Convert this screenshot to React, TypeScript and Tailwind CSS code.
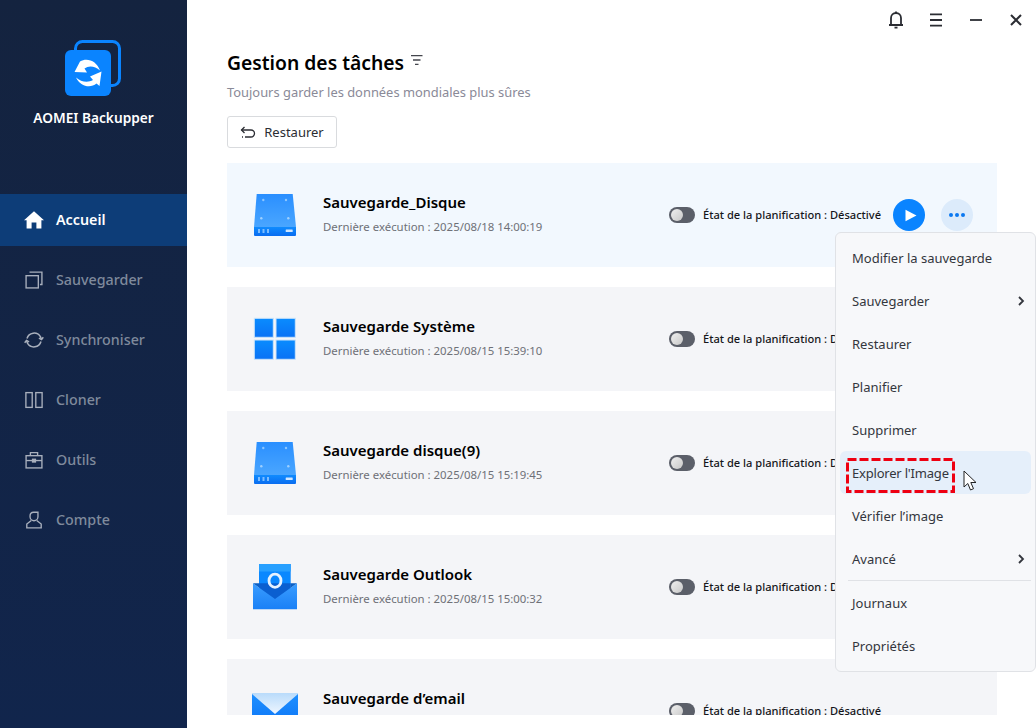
import React from "react";

const FONT = { fontFamily: '"Noto Sans", "Open Sans", sans-serif' };

function Home() {
  return (
    <svg width="20" height="20" viewBox="0 0 20 20" fill="#fff">
      <path d="M10 1.2 L20 10.2 L17.4 10.2 L17.4 18.6 L12.4 18.6 L12.4 12.6 L7.6 12.6 L7.6 18.6 L2.6 18.6 L2.6 10.2 L0 10.2 Z" />
    </svg>
  );
}
const stroke = { fill: "none", stroke: "#a9b0bd", strokeWidth: 1.5 };
function BackupIco() {
  return (
    <svg width="18" height="18" viewBox="0 0 20 20" {...stroke}>
      <rect x="1.2" y="5.2" width="13.6" height="13.6" />
      <path d="M5 1.2 H18.8 V15 H16.6" />
    </svg>
  );
}
function SyncIco() {
  return (
    <svg width="20" height="20" viewBox="0 0 20 20" {...stroke}>
      <path d="M3 8.5 A7.4 7.4 0 0 1 16.4 6.6 L17.5 9.2" />
      <path d="M17 11.5 A7.4 7.4 0 0 1 3.6 13.4 L2.5 10.8" />
      <path d="M19.3 7.2 L17.5 9.6 L14.9 8.2" />
      <path d="M0.7 12.8 L2.5 10.4 L5.1 11.8" />
    </svg>
  );
}
function CloneIco() {
  return (
    <svg width="18" height="18" viewBox="0 0 20 20" {...stroke}>
      <rect x="1" y="1.8" width="7" height="16.4" />
      <rect x="12" y="1.8" width="7" height="16.4" />
    </svg>
  );
}
function ToolsIco() {
  return (
    <svg width="18" height="18" viewBox="0 0 20 20" {...stroke}>
      <rect x="1.2" y="5.2" width="17.6" height="13.6" />
      <path d="M1.2 10.6 H18.8" />
      <path d="M6 5 V1.8 H14 V5" />
      <rect x="8.4" y="9.2" width="3.2" height="3" fill="#a9b0bd" />
    </svg>
  );
}
function UserIco() {
  return (
    <svg width="18" height="18" viewBox="0 0 20 20" {...stroke}>
      <path d="M14.4 1.4 H9.6 A4.2 4.2 0 0 0 5.6 5.6 V6.4 A4.4 4.4 0 0 0 14.4 6.4 Z" />
      <path d="M7 10.6 L2 14.5 V18.8 H18 V14.5 L13 10.6" />
    </svg>
  );
}

function Logo() {
  return (
    <svg width="58" height="58" viewBox="0 0 58 58">
      <rect x="11.5" y="2.5" width="44" height="44" rx="7" fill="none" stroke="#0a84ff" strokeWidth="3" />
      <rect x="1" y="11" width="46" height="46" rx="6" fill="#0a84ff" />
      <path d="M16 22.5 L10.5 33 L23 33.5 L20.5 29.5 C25 26 31 27 36 31.5 C33 22 23 18 16 22.5 Z" fill="#fff" />
      <path d="M37.5 32.5 L26 37.5 L29 41 C24 44 17 43 12 38.5 C16 47 26 50 32.5 44.5 L35.5 47 Z" fill="#fff" />
    </svg>
  );
}

function DiskIcon() {
  return (
    <svg width="44" height="44" viewBox="0 0 44 44">
      <defs>
        <linearGradient id="dg" x1="0" y1="0" x2="0" y2="1">
          <stop offset="0" stopColor="#2a8fff" />
          <stop offset="1" stopColor="#4aa6ff" />
        </linearGradient>
        <linearGradient id="dh" x1="0" y1="0" x2="0" y2="1">
          <stop offset="0" stopColor="#0f8cff" />
          <stop offset="1" stopColor="#0a6cf0" />
        </linearGradient>
      </defs>
      <path d="M3.7 1 H39.7 L43 34 H1 Z" fill="url(#dg)" />
      <path d="M1 34 H43 V42 A1 1 0 0 1 42 43 H2 A1 1 0 0 1 1 42 Z" fill="url(#dh)" />
      <circle cx="10.3" cy="7" r="1.2" fill="#8cc6ff" />
      <circle cx="33" cy="7" r="1.2" fill="#8cc6ff" />
      <circle cx="8.3" cy="25.3" r="1.2" fill="#9fd0ff" />
      <circle cx="35.3" cy="25.3" r="1.2" fill="#9fd0ff" />
      <rect x="5" y="36" width="2" height="4" fill="#7dbdff" />
      <rect x="9.5" y="36" width="2" height="4" fill="#7dbdff" />
      <rect x="14" y="36" width="2" height="4" fill="#7dbdff" />
      <rect x="32.7" y="36.5" width="7" height="2.6" rx="0.5" fill="#cfe6ff" />
    </svg>
  );
}
function WinIcon() {
  return (
    <svg width="44" height="44" viewBox="0 0 44 44">
      <defs>
        <linearGradient id="wg" x1="0" y1="0" x2="0" y2="1">
          <stop offset="0" stopColor="#0a8cff" />
          <stop offset="1" stopColor="#0a72f5" />
        </linearGradient>
      </defs>
      <g fill="url(#wg)" stroke="#cbe4fb" strokeWidth="1">
        <rect x="1.3" y="1.3" width="19" height="19" />
        <rect x="23" y="1.3" width="19.3" height="19" />
        <rect x="1.3" y="23" width="19" height="19.3" />
        <rect x="23" y="23" width="19.3" height="19.3" />
      </g>
    </svg>
  );
}
function OutlookIcon() {
  return (
    <svg width="44" height="46" viewBox="0 0 44 46">
      <defs>
        <linearGradient id="og" x1="0" y1="0" x2="0" y2="1">
          <stop offset="0" stopColor="#3a9dff" />
          <stop offset="1" stopColor="#1a80f6" />
        </linearGradient>
      </defs>
      <rect x="6" y="0" width="31.7" height="28" fill="#0a88ff" />
      <rect x="6" y="0" width="31.7" height="7.5" fill="#28a0ff" />
      <path d="M6 19.3 H37.7 V30 L22 36 L6 30 Z" fill="#0a5fd0" />
      <path d="M0 19.3 L22 35 L44 19.3 V45.3 H0 Z" fill="url(#og)" />
      <path d="M6 19.3 L0 19.3 L6 23.6 Z M37.7 19.3 L44 19.3 L37.7 23.8 Z" fill="#0b5fc4" />
      <ellipse cx="22" cy="16.7" rx="6" ry="6.6" fill="none" stroke="#e5f2ff" strokeWidth="2.8" />
    </svg>
  );
}
function MailIcon() {
  return (
    <svg width="46" height="36" viewBox="0 0 46 36">
      <defs>
        <linearGradient id="mg" x1="0" y1="0" x2="0" y2="1">
          <stop offset="0" stopColor="#b9dbfb" />
          <stop offset="1" stopColor="#eef6ff" />
        </linearGradient>
        <linearGradient id="mb" x1="0" y1="0" x2="0" y2="1">
          <stop offset="0" stopColor="#1f90ff" />
          <stop offset="1" stopColor="#0a72f5" />
        </linearGradient>
      </defs>
      <rect x="0" y="0" width="46" height="36" fill="url(#mb)" />
      <path d="M0 0 H46 V1 L23 21 L0 1 Z" fill="url(#mg)" />
    </svg>
  );
}

function Toggle() {
  return (
    <div className="relative h-4 w-[26px] shrink-0 rounded-full bg-[#5b5f69]">
      <div className="absolute left-[2px] top-[2px] h-3 w-3 rounded-full bg-gradient-to-br from-[#f0f0f0] to-[#c8c8c8]" />
    </div>
  );
}

type Task = { icon: React.ReactNode; name: string; date?: string; active?: boolean };

function Card({ icon, name, date, active }: Task) {
  return (
    <div className={`flex h-[104px] shrink-0 items-center pr-6 ${active ? "bg-[#f2f8fe]" : "bg-[#f4f5f8]"}`}>
      <div className="flex w-[96px] justify-center">
        <div className="flex h-[46px] w-[46px] items-center justify-center">{icon}</div>
      </div>
      <div className="flex w-[346px] flex-col self-start pt-[29px]">
        <div className="text-[15px] font-semibold leading-[20px] text-black">{name}</div>
        <div className="mt-[6px] h-[18px] text-[11.4px] leading-[18px] text-[#6e7077]">
          {date ? `Dernière exécution : ${date}` : ""}
        </div>
      </div>
      <Toggle />
      <div className="ml-[8px] whitespace-nowrap text-[11.1px] font-medium text-[#15161a]">
        État de la planification : Désactivé
      </div>
      {active && (
        <div className="ml-auto flex items-center gap-4">
          <div className="flex h-8 w-8 items-center justify-center rounded-full bg-[#0a84ff]">
            <svg width="12" height="13" viewBox="0 0 12 13" fill="#fff" className="ml-[3px]">
              <path d="M0.5 0.7 V12.3 L11.5 6.5 Z" />
            </svg>
          </div>
          <div className="flex h-8 w-8 items-center justify-center gap-[2px] rounded-full bg-[#dcebfb]">
            <span className="h-1 w-1 rounded-full bg-[#0a78f0]" />
            <span className="h-1 w-1 rounded-full bg-[#0a78f0]" />
            <span className="h-1 w-1 rounded-full bg-[#0a78f0]" />
          </div>
        </div>
      )}
    </div>
  );
}

function Chevron() {
  return (
    <svg width="8" height="10" viewBox="0 0 8 10" fill="none" stroke="#33363d" strokeWidth="1.8" className="-mt-[2px]">
      <path d="M2 1 L6 5 L2 9" />
    </svg>
  );
}

function Cursor() {
  return (
    <svg width="16" height="22" viewBox="0 0 16 22" className="absolute left-[123px] top-[19px]">
      <path d="M1 1 V17 L4.8 13.5 L7.5 20 L10.5 18.7 L7.8 12.5 L13 12.5 Z" fill="#fff" stroke="#222" strokeWidth="1" />
    </svg>
  );
}

function RedBox() {
  return (
    <svg width="109" height="35" viewBox="0 0 109 35" fill="none" className="absolute left-[6px] top-[7px]">
      <rect x="1.5" y="1.5" width="106" height="32" stroke="#ee0011" strokeWidth="3" strokeDasharray="9 3" />
    </svg>
  );
}

function Menu() {
  const items = [
    { t: "Modifier la sauvegarde" },
    { t: "Sauvegarder", c: true },
    { t: "Restaurer" },
    { t: "Planifier" },
    { t: "Supprimer" },
    { t: "Explorer l'Image", h: true },
    { t: "Vérifier l’image" },
    { t: "Avancé", c: true },
  ];
  return (
    <div className="absolute left-[835px] top-[232px] w-[201px] rounded-md border border-[#e0e2e6] bg-[#f7f8fa] px-1 pb-[4px] pt-[3px]">
      <div className="flex flex-col">
        {items.map((i) => (
          <div
            key={i.t}
            className={`relative flex h-[43px] items-center justify-between rounded-md pl-3 pr-[6px] pt-[2px] text-[13px] text-[#33363d] ${i.h ? "bg-[#e5effa]" : ""}`}
          >
            <span className={i.h ? "tracking-[-0.2px]" : ""}>{i.t}</span>
            {i.c && <Chevron />}
            {i.h && (
              <>
                <RedBox />
                <Cursor />
              </>
            )}
          </div>
        ))}
      </div>
      <div className="ml-[8px] h-px bg-[#e0e2e6]" />
      <div className="flex h-[43px] items-center pl-3 pt-[2px] text-[13px] text-[#33363d]">Journaux</div>
      <div className="flex h-[43px] items-center pl-3 pt-[2px] text-[13px] text-[#33363d]">Propriétés</div>
    </div>
  );
}

function Nav({ icon, label, active }: { icon: React.ReactNode; label: string; active?: boolean }) {
  return (
    <div
      className={`flex items-center pl-6 text-[14.3px] ${active ? "h-[52px] bg-[#0d3d78] font-semibold text-white" : "h-[60px] font-medium text-[#7f8a9c]"}`}
    >
      <div className="flex h-5 w-5 items-center justify-center">{icon}</div>
      <span className="ml-3">{label}</span>
    </div>
  );
}

export default function App() {
  return (
    <div className="relative flex h-[728px] w-[1036px] overflow-hidden bg-white" style={FONT}>
      <aside className="flex w-[187px] shrink-0 flex-col bg-gradient-to-b from-[#14233f] to-[#11254c]">
        <div className="flex h-[194px] flex-col items-center pt-[39px]">
          <div className="-ml-[1px]">
            <Logo />
          </div>
          <div className="mt-[11px] text-[13.7px] font-semibold leading-[20px] text-white">AOMEI Backupper</div>
        </div>
        <Nav active icon={<Home />} label="Accueil" />
        <div className="mt-[4px] flex flex-col">
          <Nav icon={<BackupIco />} label="Sauvegarder" />
          <Nav icon={<SyncIco />} label="Synchroniser" />
          <Nav icon={<CloneIco />} label="Cloner" />
          <Nav icon={<ToolsIco />} label="Outils" />
          <Nav icon={<UserIco />} label="Compte" />
        </div>
      </aside>

      <main className="relative flex min-w-0 flex-1 flex-col">
        <div className="flex h-[40px] items-center justify-end gap-[20px] pr-[10px]">
          <svg width="20" height="20" viewBox="0 0 20 20" fill="none" stroke="#2b2d33" strokeWidth="1.8">
            <path d="M3 15 H17 M5 15 V8 A5 5 0 0 1 15 8 V15" />
            <path d="M8.5 17.6 H11.5" />
            <path d="M10 1.6 V3" />
          </svg>
          <svg width="20" height="20" viewBox="0 0 20 20" fill="none" stroke="#2b2d33" strokeWidth="1.8">
            <path d="M4 4.3 H16 M4 10 H16 M4 15.7 H16" />
          </svg>
          <svg width="20" height="20" viewBox="0 0 20 20" fill="none" stroke="#2b2d33" strokeWidth="1.8">
            <path d="M4 10 H16" />
          </svg>
          <svg width="20" height="20" viewBox="0 0 20 20" fill="none" stroke="#2b2d33" strokeWidth="2">
            <path d="M5 5 L15 15 M15 5 L5 15" />
          </svg>
        </div>
        <div className="flex min-h-0 flex-1 flex-col pb-[13px] pl-10 pr-[39px]">
          <div className="flex items-center gap-[6px] pt-[9px]">
            <h1 className="text-[19.3px] font-semibold leading-[28px] text-black">Gestion des tâches</h1>
            <svg width="14" height="14" viewBox="0 0 14 14" fill="none" stroke="#44464d" strokeWidth="1.3" className="-mt-[6px]">
              <path d="M1 2.7 H12.5 M3 7 H10.5 M5 11.3 H8.5" />
            </svg>
          </div>
          <div className="mt-[5px] text-[12.9px] leading-[20px] text-[#8a8a98]">Toujours garder les données mondiales plus sûres</div>
          <button className="mt-[14px] flex h-8 w-[110px] items-center justify-center gap-[8px] rounded-[3px] border border-[#d9dbde] bg-white pt-[1px] text-[13px] text-[#2b2d33]">
            <svg width="16" height="14" viewBox="0 0 16 14" fill="none" stroke="#2b2d33" strokeWidth="1.3">
              <path d="M1.5 4 H11 A3.5 3.5 0 0 1 11 11 H5" />
              <path d="M4.5 1 L1.5 4 L4.5 7" />
              <path d="M2 11 H3" />
            </svg>
            Restaurer
          </button>
          <div className="mt-[15px] flex min-h-0 flex-1 flex-col gap-5 overflow-hidden">
            <Card active icon={<DiskIcon />} name="Sauvegarde_Disque" date="2025/08/18 14:00:19" />
            <Card icon={<WinIcon />} name="Sauvegarde Système" date="2025/08/15 15:39:10" />
            <Card icon={<DiskIcon />} name="Sauvegarde disque(9)" date="2025/08/15 15:19:45" />
            <Card icon={<OutlookIcon />} name="Sauvegarde Outlook" date="2025/08/15 15:00:32" />
            <Card icon={<MailIcon />} name="Sauvegarde d’email" />
          </div>
        </div>
      </main>
      <Menu />
    </div>
  );
}
